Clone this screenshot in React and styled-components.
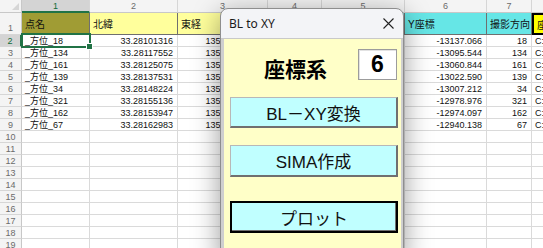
import React from 'react';
import styled, { createGlobalStyle } from 'styled-components';

const GlobalStyle = createGlobalStyle`
  html, body {
    margin: 0;
    padding: 0;
    background: #ffffff;
  }
  body {
    width: 543px;
    height: 248px;
    overflow: hidden;
  }
`;

const COLS = [68, 88, 90, 54, 83, 82, 45, 80];
const EMPTY_ROWS = 10;

// cols 4 and 5 sit under the dialog, so they are left blank
const HEADERS = [
  { text: '点名', bg: '#a09c34' },
  { text: '北緯', bg: '#ffff9c' },
  { text: '東経', bg: '#ffff9c' },
  { text: '', bg: '#66e6e6' },
  { text: '', bg: '#66e6e6' },
  { text: 'Y座標', bg: '#66e6e6' },
  { text: '撮影方向', bg: '#66e6e6' },
  { text: '座標系', bg: '#ffff00', boxed: true },
];

const DATA = [
  ['_方位_18', '33.28101316', '135.61230843', '', '', '-13137.066', '18'],
  ['_方位_134', '33.28117552', '135.61275516', '', '', '-13095.544', '134'],
  ['_方位_161', '33.28125075', '135.61312689', '', '', '-13060.844', '161'],
  ['_方位_139', '33.28137531', '135.61353696', '', '', '-13022.590', '139'],
  ['_方位_34', '33.28148224', '135.61370213', '', '', '-13007.212', '34'],
  ['_方位_321', '33.28155136', '135.61400439', '', '', '-12978.976', '321'],
  ['_方位_162', '33.28153947', '135.61405668', '', '', '-12974.097', '162'],
  ['_方位_67', '33.28162983', '135.61442076', '', '', '-12940.138', '67'],
];

const Screen = styled.div`
  position: relative;
  width: 543px;
  height: 248px;
  overflow: hidden;
  font-family: "Liberation Sans", "Noto Sans CJK JP", sans-serif;
`;

const Sheet = styled.div`
  display: grid;
  grid-template-columns: 22px ${COLS.map(w => `${w}px`).join(' ')};
  grid-template-rows: 13px 22px repeat(${DATA.length + EMPTY_ROWS}, 12px);
`;

const Corner = styled.div`
  position: relative;
  box-sizing: border-box;
  background: #f4f4f4;
  border-right: 1px solid #c8c8c8;
  border-bottom: 1px solid #c8c8c8;

  &::after {
    content: '';
    position: absolute;
    right: 2px;
    bottom: 2px;
    border-left: 7px solid transparent;
    border-bottom: 7px solid #d6d6d6;
  }
`;

const ColHead = styled.div`
  box-sizing: border-box;
  background: ${p => (p.$active ? '#d4d4d4' : '#f4f4f4')};
  border-right: 1px solid #d6d6d6;
  border-bottom: ${p => (p.$active ? '2px solid #217346' : '1px solid #c8c8c8')};
  color: ${p => (p.$active ? '#0f6b3a' : '#6b6b6b')};
  font-size: 9px;
  line-height: 12px;
  text-align: center;
`;

const RowHead = styled.div`
  box-sizing: border-box;
  background: ${p => (p.$active ? '#d4d4d4' : '#f4f4f4')};
  border-right: ${p => (p.$active ? '2px solid #217346' : '1px solid #c8c8c8')};
  border-bottom: 1px solid #d6d6d6;
  color: ${p => (p.$active ? '#0f6b3a' : '#6b6b6b')};
  font-size: 9px;
  display: flex;
  align-items: ${p => (p.$tall ? 'flex-end' : 'center')};
  justify-content: center;
  padding-bottom: ${p => (p.$tall ? '1px' : '0')};
`;

const Cell = styled.div`
  box-sizing: border-box;
  display: flex;
  align-items: center;
  justify-content: ${p => (p.$right ? 'flex-end' : 'flex-start')};
  padding: 0 4px 0 3px;
  background: ${p => p.$bg || '#ffffff'};
  border-right: 1px solid ${p => (p.$header ? '#6f6f6f' : '#dadada')};
  border-bottom: 1px solid ${p => (p.$header ? '#6f6f6f' : '#dadada')};
  border: ${p => (p.$boxed ? '2px solid #000000' : undefined)};
  color: #111111;
  font-size: ${p => (p.$header ? '10px' : '9px')};
  white-space: nowrap;
  overflow: hidden;
`;

const Selection = styled.div`
  position: absolute;
  left: 21px;
  top: 33px;
  width: 70px;
  height: 15px;
  box-sizing: border-box;
  border: 2px solid #217346;
  pointer-events: none;

  &::after {
    content: '';
    position: absolute;
    right: -4px;
    bottom: -4px;
    width: 5px;
    height: 5px;
    background: #217346;
    border: 1px solid #ffffff;
  }
`;

const Dialog = styled.div`
  position: absolute;
  left: 220px;
  top: 8px;
  width: 184px;
  height: 252px;
  box-sizing: border-box;
  display: flex;
  flex-direction: column;
  border: 1px solid #8e8e8e;
  border-radius: 8px 8px 0 0;
  background: #f3f4f7;
  box-shadow: 0 6px 28px rgba(0, 0, 0, 0.4);
  overflow: hidden;
`;

const TitleBar = styled.div`
  flex: none;
  height: 29px;
  display: flex;
  align-items: center;
  justify-content: space-between;
  padding: 0 9px 0 8px;
  border-bottom: 1px solid #c9c9c9;
  font-family: "Noto Sans", "Liberation Sans", sans-serif;
  font-size: 12px;
  color: #1b1b1b;
`;

const Body = styled.div`
  flex: 1;
  display: flex;
  flex-direction: column;
  padding: 10px 3px 0 6px;
  background: #ffffc8;
  border-left: 3px solid #cfcfcf;
  border-right: 2px solid #cfcfcf;
`;

const FieldRow = styled.div`
  display: flex;
  align-items: center;
  height: 31px;
`;

const FieldLabel = styled.div`
  margin: 6px 0 0 34px;
  font-family: "Noto Sans CJK JP", sans-serif;
  font-size: 21px;
  font-weight: 700;
  color: #000000;
`;

const FieldBox = styled.div`
  margin-left: auto;
  margin-right: 1px;
  width: 39px;
  height: 31px;
  box-sizing: border-box;
  display: flex;
  align-items: center;
  justify-content: center;
  background: #ffffff;
  border: 1px solid #9c9c9c;
  box-shadow: inset 1px 1px #e2e2e2;
  font-family: "Liberation Sans", sans-serif;
  font-size: 23px;
  font-weight: 700;
  color: #000000;
`;

const Button = styled.div`
  flex: none;
  height: ${p => p.$h}px;
  margin-top: ${p => p.$top}px;
  box-sizing: border-box;
  display: flex;
  align-items: center;
  justify-content: center;
  background: #c0ffff;
  border-top: ${p => (p.$default ? '2px solid #000' : '1px solid #b8b8b8')};
  border-left: ${p => (p.$default ? '2px solid #000' : '1px solid #b8b8b8')};
  border-right: 2px solid ${p => (p.$default ? '#000' : '#707070')};
  border-bottom: 2px solid ${p => (p.$default ? '#000' : '#707070')};
  box-shadow: ${p => (p.$default ? 'inset -1px -1px #707070' : 'none')};
  font-family: "Liberation Sans", "Noto Sans CJK JP", sans-serif;
  font-size: 17px;
  color: #111111;
`;

const CloseIcon = () => (
  <svg width="11" height="11" viewBox="0 0 11 11">
    <path d="M0.5 0.5 L10.5 10.5 M10.5 0.5 L0.5 10.5" stroke="#222" strokeWidth="1.1" fill="none" />
  </svg>
);

const App = () => {
  const numberCols = [1, 2, 3, 4, 5, 6];

  return (
    <Screen>
      <GlobalStyle />
      <Sheet>
        <Corner />
        {COLS.map((w, i) => (
          <ColHead key={i} $active={i === 0}>{i + 1}</ColHead>
        ))}

        <RowHead $tall>1</RowHead>
        {HEADERS.map((h, i) => (
          <Cell key={i} $header $bg={h.bg} $boxed={h.boxed}>{h.text}</Cell>
        ))}

        {DATA.map((row, r) => (
          <React.Fragment key={r}>
            <RowHead $active={r === 0}>{r + 2}</RowHead>
            {row.map((v, c) => (
              <Cell key={c} $right={numberCols.includes(c)}>{v}</Cell>
            ))}
            <Cell>C:</Cell>
          </React.Fragment>
        ))}

        {Array.from({ length: EMPTY_ROWS }).map((_, r) => (
          <React.Fragment key={`e${r}`}>
            <RowHead>{DATA.length + r + 2}</RowHead>
            {COLS.map((w, c) => <Cell key={c} />)}
          </React.Fragment>
        ))}
      </Sheet>

      <Selection />

      <Dialog>
        <TitleBar>
          <span>BL to XY</span>
          <CloseIcon />
        </TitleBar>
        <Body>
          <FieldRow>
            <FieldLabel>座標系</FieldLabel>
            <FieldBox>6</FieldBox>
          </FieldRow>
          <Button $h={31} $top={17}>BL－XY変換</Button>
          <Button $h={32} $top={17}>SIMA作成</Button>
          <Button $h={32} $top={24} $default>プロット</Button>
        </Body>
      </Dialog>
    </Screen>
  );
};

export default App;
